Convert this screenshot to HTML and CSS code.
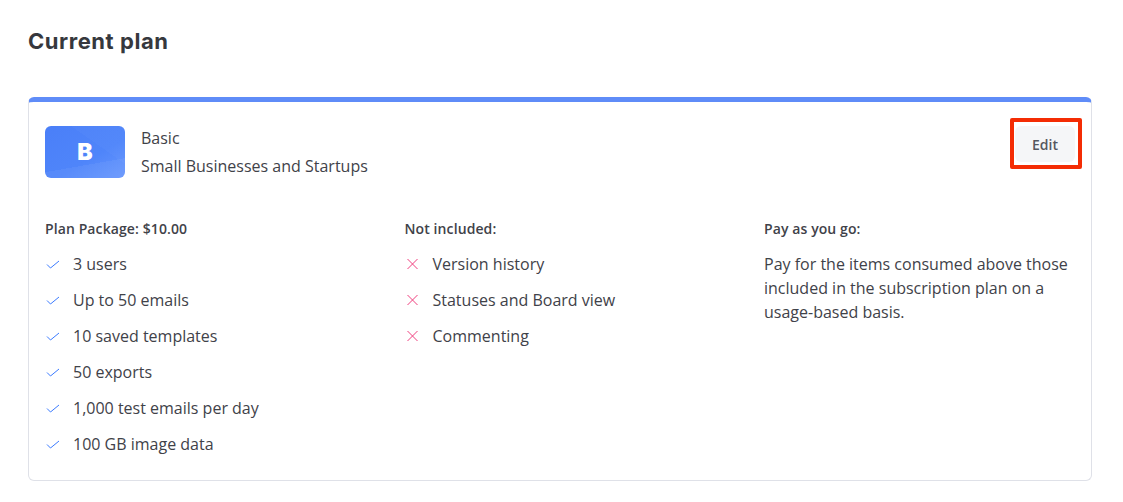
FILE: index.html
```html
<!DOCTYPE html>
<html lang="en">
<head>
<meta charset="utf-8">
<title>Current plan</title>
<link rel="stylesheet" href="styles.css">
</head>
<body>
<main class="page">
  <h1 class="title">Current plan</h1>
  <section class="card">
    <header class="plan-head">
      <div class="logo">B</div>
      <div class="plan-name">
        <div>Basic</div>
        <div>Small Businesses and Startups</div>
      </div>
      <div class="edit-wrap">
        <button class="edit">Edit</button>
        <span class="highlight"></span>
      </div>
    </header>
    <div class="cols">
      <div class="col">
        <h2 class="col-title">Plan Package: $10.00</h2>
        <ul class="list">
          <li><svg class="icon" viewBox="0 0 14 14"><path class="check" d="M2 7.5 L5.5 11 L14 4"/></svg>3 users</li>
          <li><svg class="icon" viewBox="0 0 14 14"><path class="check" d="M2 7.5 L5.5 11 L14 4"/></svg>Up to 50 emails</li>
          <li><svg class="icon" viewBox="0 0 14 14"><path class="check" d="M2 7.5 L5.5 11 L14 4"/></svg>10 saved templates</li>
          <li><svg class="icon" viewBox="0 0 14 14"><path class="check" d="M2 7.5 L5.5 11 L14 4"/></svg>50 exports</li>
          <li><svg class="icon" viewBox="0 0 14 14"><path class="check" d="M2 7.5 L5.5 11 L14 4"/></svg>1,000 test emails per day</li>
          <li><svg class="icon" viewBox="0 0 14 14"><path class="check" d="M2 7.5 L5.5 11 L14 4"/></svg>100 GB image data</li>
        </ul>
      </div>
      <div class="col">
        <h2 class="col-title">Not included:</h2>
        <ul class="list">
          <li><svg class="icon" viewBox="0 0 14 14"><path class="cross" d="M2.5 2 L12.5 12 M12.5 2 L2.5 12"/></svg>Version history</li>
          <li><svg class="icon" viewBox="0 0 14 14"><path class="cross" d="M2.5 2 L12.5 12 M12.5 2 L2.5 12"/></svg>Statuses and Board view</li>
          <li><svg class="icon" viewBox="0 0 14 14"><path class="cross" d="M2.5 2 L12.5 12 M12.5 2 L2.5 12"/></svg>Commenting</li>
        </ul>
      </div>
      <div class="col">
        <h2 class="col-title">Pay as you go:</h2>
        <p class="desc">Pay for the items consumed above those included in the subscription plan on a usage-based basis.</p>
      </div>
    </div>
  </section>
</main>
</body>
</html>
```
FILE: styles.css
```css
* { box-sizing: border-box; }
html, body { margin: 0; background: #fff; }
body {
  font-family: "Open Sans", "Liberation Sans", sans-serif;
  color: #3f4249;
  font-size: 16px;
  overflow: hidden;
}
.page { padding: 26px 31px 0 28px; }
.title {
  margin: 0 0 40px;
  font-family: Inter, "Open Sans", sans-serif;
  font-size: 22px;
  letter-spacing: 0.55px;
  line-height: 31px;
  font-weight: 700;
  color: #36383d;
}
.card {
  height: 384px;
  border: 1px solid #dfe1e8;
  border-top: 5px solid #5f8cf8;
  border-radius: 6px;
  padding: 24px 16px 0;
}
.plan-head { display: flex; align-items: flex-start; }
.logo {
  width: 80px;
  height: 52px;
  border-radius: 6px;
  background:
    linear-gradient(170deg, transparent 70%, rgba(255, 255, 255, 0.05) 70%),
    linear-gradient(35deg, transparent 65%, rgba(255, 255, 255, 0.025) 65%),
    linear-gradient(150deg, #4a7ff8 0%, #4f85fa 60%, #6897fd 100%);
  color: #fff;
  font-family: Inter, "Open Sans", sans-serif;
  font-weight: 900;
  font-size: 23px;
  display: flex;
  align-items: center;
  justify-content: center;
}
.plan-name { margin: -2px 0 0 16px; line-height: 28px; flex: 1; }
.edit-wrap { position: relative; }
.edit {
  display: block;
  width: 60px;
  height: 36px;
  border: 0;
  border-radius: 6px;
  background: #f5f6f8;
  color: #55585f;
  font: 600 14px "Open Sans", sans-serif;
}
.highlight {
  position: absolute;
  left: -5px;
  top: -8px;
  width: 72px;
  height: 51px;
  border: 4px solid #f42c04;
  border-radius: 2px;
}
.cols {
  display: grid;
  grid-template-columns: repeat(3, 359.5px);
  margin-top: 37px;
}
.col-title {
  margin: 0 0 5px;
  font-size: 14px;
  letter-spacing: 0.1px;
  line-height: 24px;
  font-weight: 600;
  color: #3f4249;
}
.list { list-style: none; margin: 0; padding: 0; }
.list li {
  display: flex;
  align-items: center;
  height: 36px;
  line-height: 24px;
}
.icon { width: 14px; height: 14px; margin: 0 14px 0 0; flex: none; overflow: visible; }
.check, .cross { fill: none; stroke-width: 1; }
.check { stroke: #3b7bff; }
.cross { stroke: #f0407f; }
.desc { margin: 11px 0 0; line-height: 24px; width: 320px; }
```
